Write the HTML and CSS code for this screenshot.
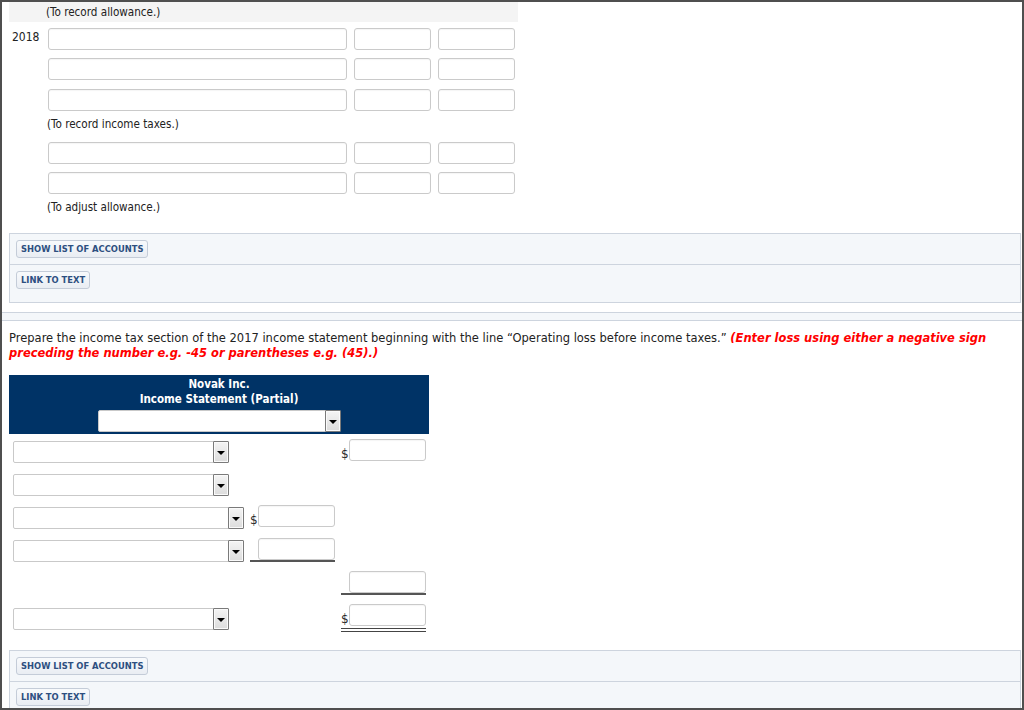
FILE: index.html
```html
<!DOCTYPE html>
<html>
<head>
<meta charset="utf-8">
<link rel="stylesheet" href="styles.css">
</head>
<body>
<div class="frame">
  <section class="top">
    <div class="band">(To record allowance.)</div>
    <div class="jrow r1"><span class="year">2018</span><span class="inp acct"></span><span class="inp amt"></span><span class="inp amt"></span></div>
    <div class="jrow r2"><span class="year"></span><span class="inp acct"></span><span class="inp amt"></span><span class="inp amt"></span></div>
    <div class="jrow r3"><span class="year"></span><span class="inp acct"></span><span class="inp amt"></span><span class="inp amt"></span></div>
    <div class="note">(To record income taxes.)</div>
    <div class="jrow r4"><span class="year"></span><span class="inp acct"></span><span class="inp amt"></span><span class="inp amt"></span></div>
    <div class="jrow r5"><span class="year"></span><span class="inp acct"></span><span class="inp amt"></span><span class="inp amt"></span></div>
    <div class="note">(To adjust allowance.)</div>
    <div class="panel">
      <div class="prow"><button class="btn">SHOW LIST OF ACCOUNTS</button></div>
      <div class="prow last"><button class="btn">LINK TO TEXT</button></div>
    </div>
  </section>
  <div class="divider"></div>
  <section class="bottom">
    <p class="question">Prepare the income tax section of the 2017 income statement beginning with the line “Operating loss before income taxes.” <em class="hint">(Enter loss using either a negative sign</em> <em class="hint">preceding the number e.g. -45 or parentheses e.g. (45).)</em></p>
    <div class="statement">
      <div class="st-head">
        <div class="st-title">Novak Inc.</div>
        <div class="st-title">Income Statement (Partial)</div>
        <div class="sel head-sel"><span class="arrow"></span></div>
      </div>
      <div class="st-body">
        <div class="c1"><div class="sel short"><span class="arrow"></span></div></div>
        <div class="c2"></div>
        <div class="c3"><div class="amount"><span class="dollar">$</span><span class="inp num"></span></div></div>

        <div class="c1"><div class="sel short"><span class="arrow"></span></div></div>
        <div class="c2"></div>
        <div class="c3"></div>

        <div class="c1"><div class="sel long"><span class="arrow"></span></div></div>
        <div class="c2"><div class="amount"><span class="dollar">$</span><span class="inp num"></span></div></div>
        <div class="c3"></div>

        <div class="c1"><div class="sel long"><span class="arrow"></span></div></div>
        <div class="c2"><div class="amount underline"><span class="dollar"></span><span class="inp num"></span></div></div>
        <div class="c3"></div>

        <div class="c1"></div>
        <div class="c2"></div>
        <div class="c3"><div class="amount underline"><span class="dollar"></span><span class="inp num"></span></div></div>

        <div class="c1"><div class="sel short low"><span class="arrow"></span></div></div>
        <div class="c2"></div>
        <div class="c3"><div class="amount double"><span class="dollar">$</span><span class="inp num"></span></div></div>
      </div>
    </div>
    <div class="panel panel-bottom">
      <div class="prow"><button class="btn">SHOW LIST OF ACCOUNTS</button></div>
      <div class="prow last"><button class="btn">LINK TO TEXT</button></div>
    </div>
  </section>
</div>
</body>
</html>
```

FILE: styles.css
```css
html, body {
  margin: 0;
  padding: 0;
  background: #fff;
}
body {
  font-family: "DejaVu Sans Condensed", "DejaVu Sans", Verdana, sans-serif;
  color: #222;
}
.frame {
  width: 1024px;
  height: 710px;
  box-sizing: border-box;
  border: 2px solid #4f4f4f;
  overflow: hidden;
}
.top {
  padding-left: 7px;
}
.band {
  width: 509px;
  height: 20px;
  box-sizing: border-box;
  padding-left: 37px;
  background: #f4f4f4;
  font-size: 11.6px;
  line-height: 20px;
}
.jrow {
  display: flex;
  height: 22px;
}
.r1 { margin-top: 6px; }
.r2 { margin-top: 8px; }
.r3 { margin-top: 9px; }
.r4 { margin-top: 6px; }
.r5 { margin-top: 8px; }
.year {
  width: 39px;
  flex: none;
  padding-left: 3px;
  box-sizing: border-box;
  font-size: 12px;
  line-height: 19px;
}
.inp {
  display: block;
  height: 22px;
  box-sizing: border-box;
  border: 1px solid #cacaca;
  border-radius: 3px;
  background: #fff;
  box-shadow: inset 0 1px 1px rgba(0,0,0,0.04);
  flex: none;
}
.acct { width: 299px; margin-right: 7px; }
.amt { width: 77px; margin-right: 7px; }
.note {
  margin-top: 1px;
  height: 24px;
  line-height: 24px;
  padding-left: 38px;
  font-size: 11.6px;
}
.panel {
  margin-top: 14px;
  margin-right: 1px;
  border: 1px solid #cdd4de;
  background: #f4f7fa;
}
.prow {
  padding: 6px 6px;
  height: 18px;
}
.prow.last {
  border-top: 1px solid #cdd4de;
  padding-bottom: 13px;
}
.btn {
  display: block;
  height: 18px;
  box-sizing: border-box;
  margin: 0;
  padding: 0 4px;
  border: 1px solid #c4ccd8;
  border-radius: 3px;
  background: linear-gradient(#f8fafc, #e9edf3);
  font-family: "DejaVu Sans Condensed", "DejaVu Sans", Verdana, sans-serif;
  font-weight: bold;
  font-size: 9.3px;
  line-height: 16px;
  color: #2d4f80;
}
.divider {
  margin-top: 9px;
  height: 7px;
  border-top: 1px solid #cdd4de;
  border-bottom: 1px solid #cdd4de;
  background: #f4f7fa;
}
.bottom {
  padding-left: 7px;
}
.question {
  margin: 0;
  padding-top: 10px;
  width: 990px;
  font-family: "DejaVu Sans", Verdana, sans-serif;
  font-size: 11.5px;
  line-height: 15px;
  color: #222;
}
.hint {
  color: #ff0000;
  font-weight: bold;
  font-style: italic;
}
.statement {
  margin-top: 14px;
  width: 420px;
}
.st-head {
  background: #003366;
  padding: 2px 0 2px;
  display: flex;
  flex-direction: column;
  align-items: center;
}
.st-title {
  color: #fff;
  font-weight: bold;
  font-size: 11.5px;
  line-height: 15px;
}
.sel {
  height: 22px;
  box-sizing: border-box;
  border: 1px solid #c9c9c9;
  border-radius: 2px;
  background: #fff;
  display: flex;
  justify-content: flex-end;
}
.head-sel {
  width: 243px;
  margin-top: 3px;
}
.arrow {
  width: 16px;
  margin: -1px -1px -1px 0;
  box-sizing: border-box;
  border: 1px solid #7a7a7a;
  border-radius: 1px;
  background: linear-gradient(#f4f4f4, #dcdcdc);
  box-shadow: inset 0 0 0 1px #fafafa;
  display: flex;
  align-items: center;
  justify-content: center;
}
.arrow::after {
  content: "";
  display: block;
  margin-top: 2px;
  border-left: 4px solid transparent;
  border-right: 4px solid transparent;
  border-top: 4px solid #000;
}
.st-body {
  margin-top: 5px;
  display: grid;
  grid-template-columns: 236px 92px 92px;
  grid-auto-rows: 33px;
}
.c1 {
  padding-left: 4px;
}
.c1 .sel { margin-top: 2px; }
.c1 .sel.low { margin-top: 4px; }
.short { width: 216px; }
.long { width: 231px; }
.c2 { padding-left: 5px; }
.c3 { padding-left: 4px; }
.amount {
  display: flex;
  align-items: flex-end;
  width: 85px;
}
.dollar {
  width: 8px;
  flex: none;
  font-family: "DejaVu Sans", Verdana, sans-serif;
  font-size: 12px;
  line-height: 14px;
  color: #2a2a2a;
}
.num { width: 77px; }
.underline {
  border-bottom: 2px solid #555;
}
.double {
  padding-bottom: 2px;
  border-bottom: 4px double #444;
}
.panel-bottom {
  margin-top: 13px;
}
```
